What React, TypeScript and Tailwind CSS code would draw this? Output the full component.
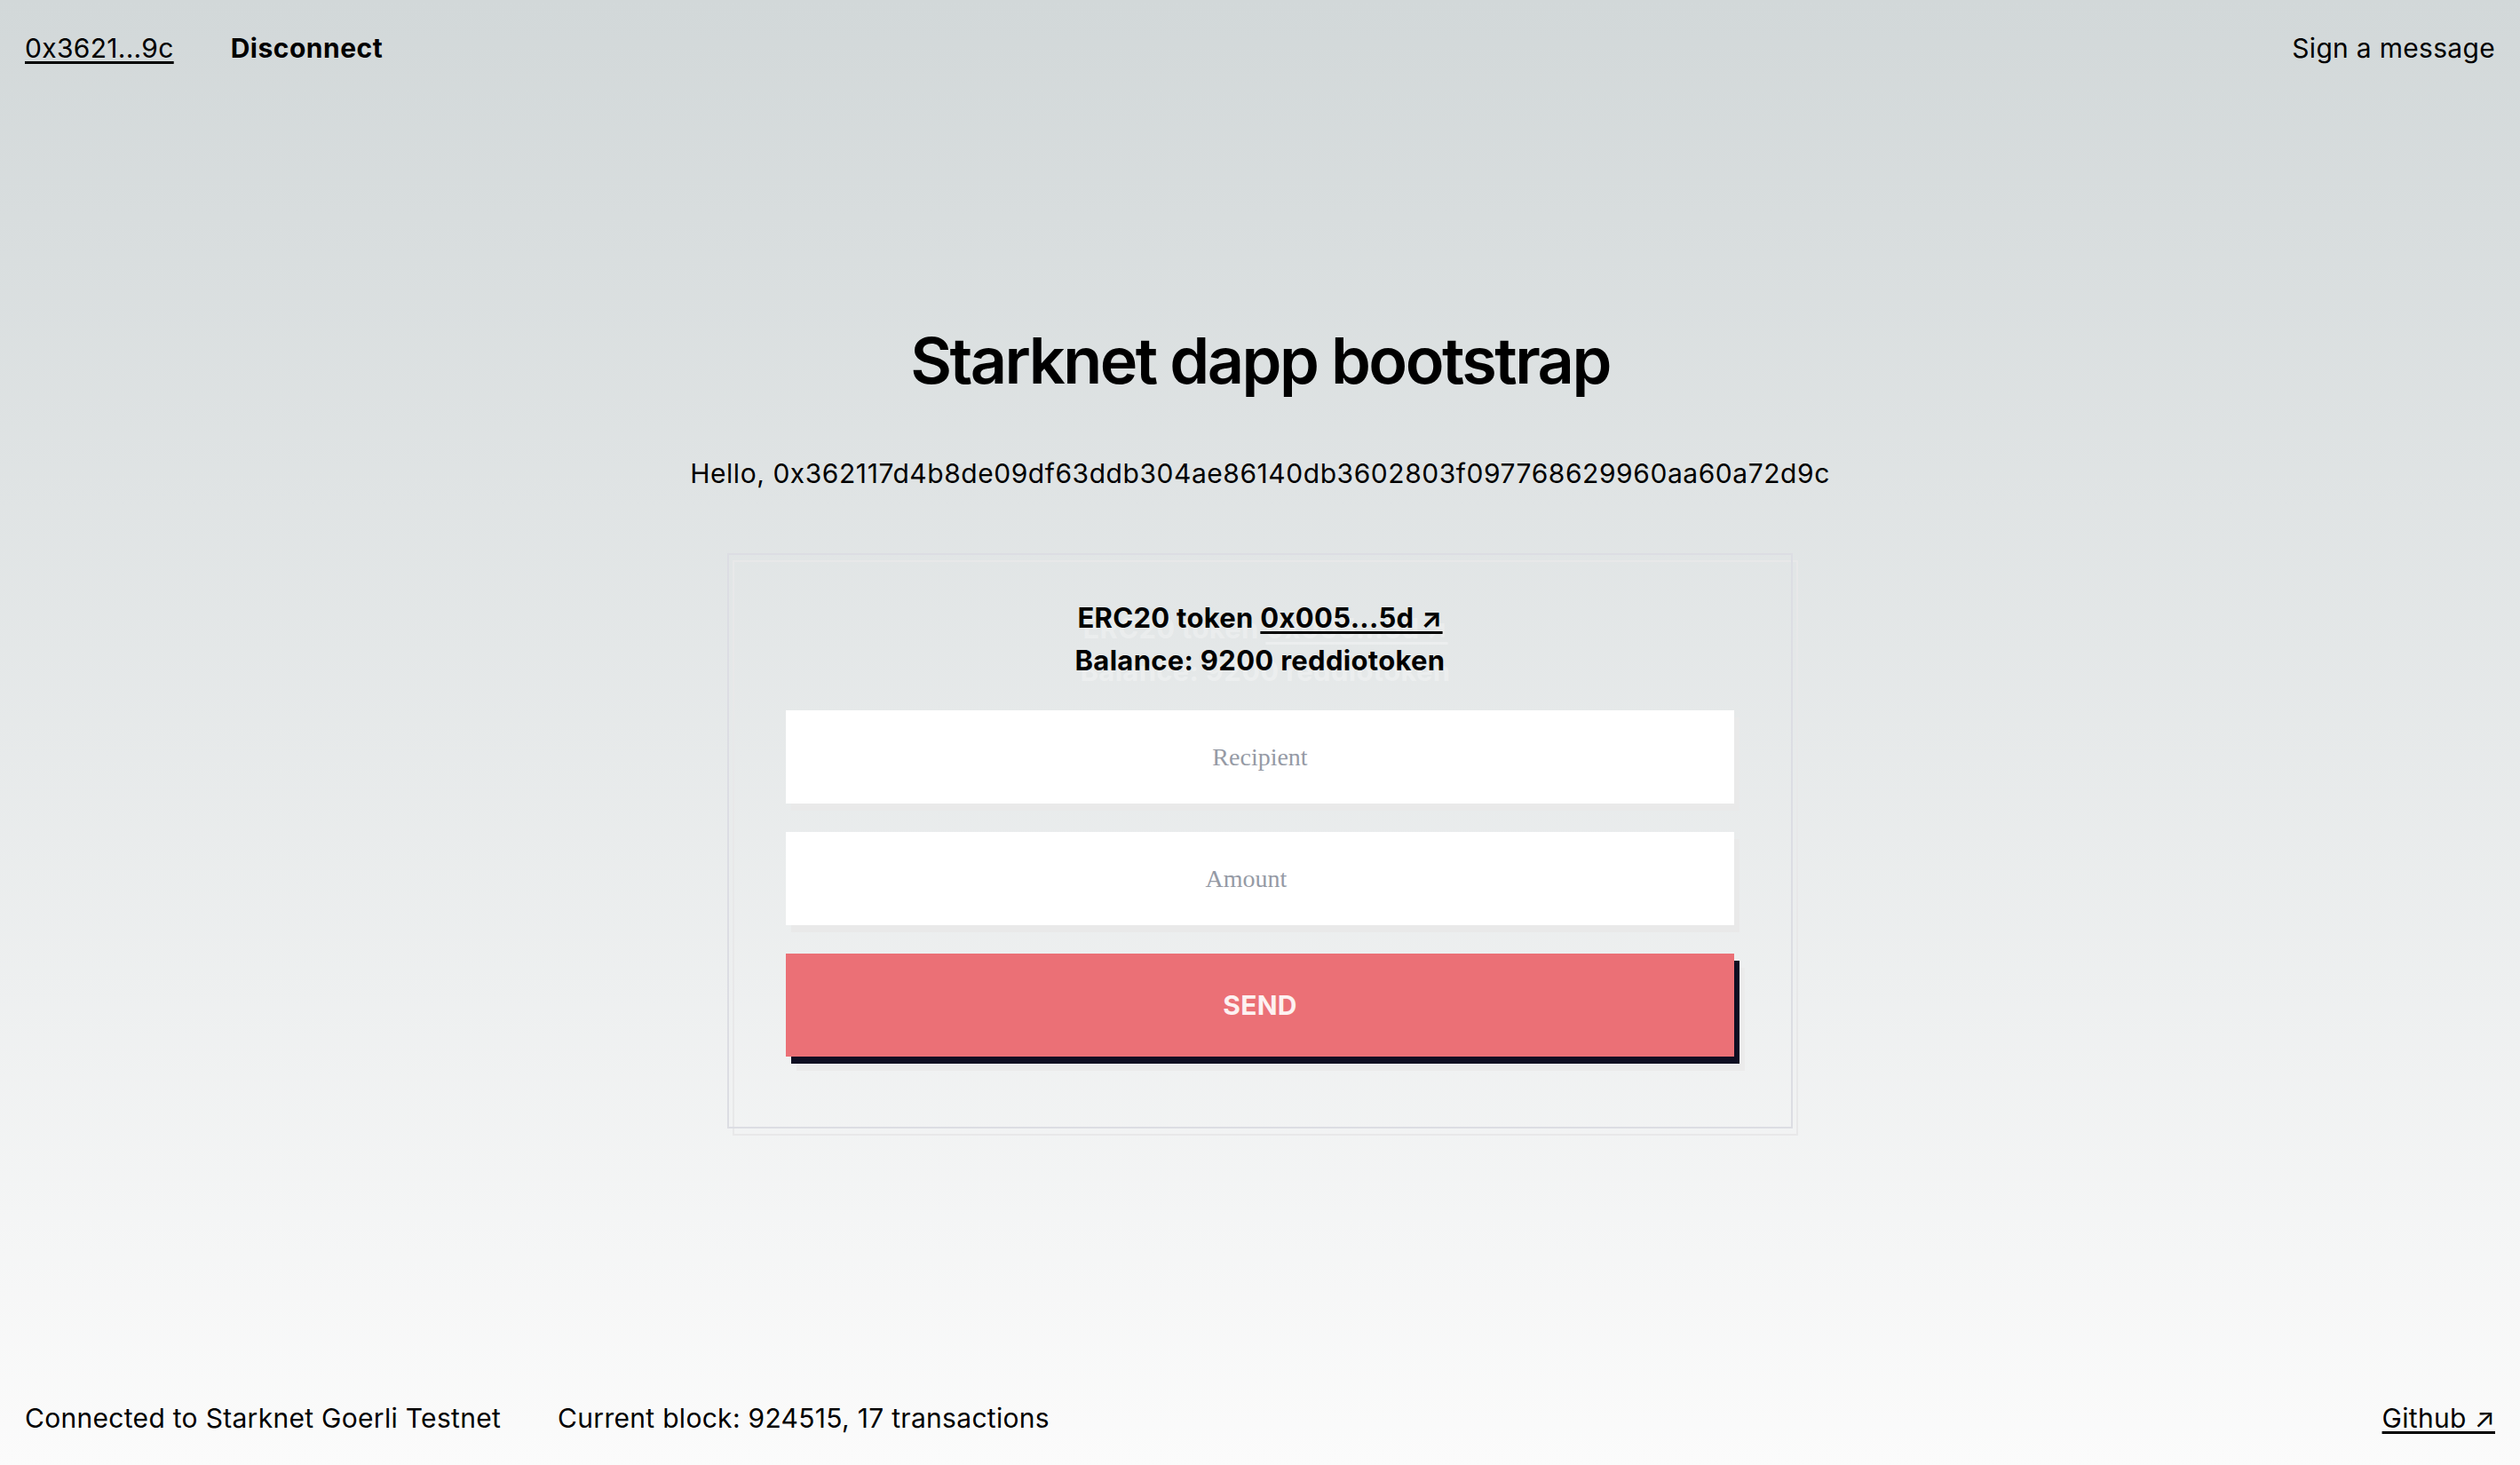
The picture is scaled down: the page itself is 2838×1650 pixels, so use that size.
import { useState } from "react";

const address = "0x362117d4b8de09df63ddb304ae86140db3602803f097768629960aa60a72d9c";

export default function App() {
  const [recipient, setRecipient] = useState("");
  const [amount, setAmount] = useState("");

  return (
    <div className="min-h-screen flex flex-col bg-gradient-to-b from-[#d2d8d9] to-[#fbfbfb] font-['Inter',sans-serif] text-black tracking-[0.3px]">
      <header className="flex items-center justify-between px-7 pt-8 text-[30px] leading-[45px]">
        <div className="flex items-center gap-16">
          <a href="#" className="underline underline-offset-4">0x3621...9c</a>
          <button className="font-bold tracking-[0.5px]">Disconnect</button>
        </div>
        <button>Sign a message</button>
      </header>

      <main className="flex-1 flex flex-col items-center pt-[293px]">
        <h1 className="text-[72px] leading-none font-semibold tracking-[-0.035em]">Starknet dapp bootstrap</h1>
        <p className="mt-[69px] text-[30px] leading-[45px] tracking-[0.55px]">Hello, {address}</p>

        <div className="relative mt-[67px] w-[1200px]">
          <div className="absolute inset-0 translate-x-[6px] translate-y-[8px] border-2 border-[#e8e8e9]" />
          <div className="relative flex flex-col gap-8 border-2 border-[#dcdde3] px-16 pt-[47px] pb-[79px]">
            <div className="text-center text-[31px] leading-[48px] font-bold [text-shadow:6px_12px_0_rgba(255,255,255,0.3)]">
              <p>
                ERC20 token{" "}
                <a href="#" className="underline underline-offset-4">0x005...5d ↗</a>
              </p>
              <p>Balance: 9200 reddiotoken</p>
            </div>
            <input
              value={recipient}
              onChange={e => setRecipient(e.target.value)}
              placeholder="Recipient"
              className="h-[105px] w-full bg-white text-center font-['Liberation_Serif',serif] text-[28px] tracking-normal outline-none placeholder:text-[#959aa5] shadow-[6px_8px_0_#e9e9e9]"
            />
            <input
              type="number"
              value={amount}
              onChange={e => setAmount(e.target.value)}
              placeholder="Amount"
              className="h-[105px] w-full bg-white pr-4 text-center font-['Liberation_Serif',serif] text-[28px] tracking-normal outline-none placeholder:text-[#959aa5] shadow-[6px_8px_0_#e9e9e9]"
            />
            <button className="h-[116px] w-full bg-[#eb7076] text-[30px] font-bold text-[#fdf1f1] shadow-[6px_8px_0_#0e0e22,12px_16px_0_#ebebeb]">
              SEND
            </button>
          </div>
        </div>
      </main>

      <footer className="flex items-center justify-between px-7 pb-[30px] text-[30px] leading-[45px]">
        <div className="flex items-center gap-16">
          <span>Connected to Starknet Goerli Testnet</span>
          <span>Current block: 924515, 17 transactions</span>
        </div>
        <a href="#" className="underline underline-offset-4">Github ↗</a>
      </footer>
    </div>
  );
}
